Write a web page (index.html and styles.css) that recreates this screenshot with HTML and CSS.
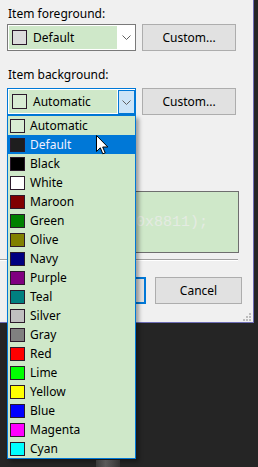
FILE: index.html
```html
<!DOCTYPE html>
<html lang="en">
<head>
    <meta charset="UTF-8">
    <title>Item Colors</title>
    <link rel="stylesheet" href="styles.css">
</head>
<body>
    <!-- Color dialog -->
    <div class="dialog">
        <div class="field-label">Item foreground:</div>
        <div class="field-row">
            <div class="combo">
                <div class="combo-value">
                    <span class="swatch" style="background:#dcdcdc"></span>
                    Default
                </div>
                <div class="combo-arrow">
                    <svg width="9" height="5" viewBox="0 0 9 5"><polyline points="0.5,0.5 4.5,4.5 8.5,0.5" fill="none" stroke="#606060" stroke-width="1"/></svg>
                </div>
            </div>
            <button class="btn">Custom...</button>
        </div>

        <div class="field-label second">Item background:</div>
        <div class="field-row">
            <div class="combo open">
                <div class="combo-value">
                    <span class="swatch" style="background:#d8ecd3"></span>
                    Automatic
                </div>
                <div class="combo-arrow">
                    <svg width="9" height="5" viewBox="0 0 9 5"><polyline points="0.5,0.5 4.5,4.5 8.5,0.5" fill="none" stroke="#606060" stroke-width="1"/></svg>
                </div>
            </div>
            <button class="btn">Custom...</button>
        </div>

        <div class="preview"><code>0x8811);</code></div>
        <div class="separator"></div>

        <div class="actions">
            <button class="btn btn-default">OK</button>
            <button class="btn btn-cancel">Cancel</button>
        </div>

        <svg class="grip" width="9" height="9" viewBox="0 0 9 9">
            <rect x="7" y="1" width="2" height="2"/>
            <rect x="4" y="4" width="2" height="2"/>
            <rect x="7" y="4" width="2" height="2"/>
            <rect x="1" y="7" width="2" height="2"/>
            <rect x="4" y="7" width="2" height="2"/>
            <rect x="7" y="7" width="2" height="2"/>
        </svg>
    </div>

    <!-- Open dropdown list -->
    <ul class="dropdown">
        <li><span class="swatch" style="background:#d8ecd3"></span>Automatic</li>
        <li class="selected"><span class="swatch" style="background:#1e1e1e"></span>Default</li>
        <li><span class="swatch" style="background:#000000"></span>Black</li>
        <li><span class="swatch" style="background:#ffffff"></span>White</li>
        <li><span class="swatch" style="background:#800000"></span>Maroon</li>
        <li><span class="swatch" style="background:#008000"></span>Green</li>
        <li><span class="swatch" style="background:#808000"></span>Olive</li>
        <li><span class="swatch" style="background:#000080"></span>Navy</li>
        <li><span class="swatch" style="background:#800080"></span>Purple</li>
        <li><span class="swatch" style="background:#008080"></span>Teal</li>
        <li><span class="swatch" style="background:#c0c0c0"></span>Silver</li>
        <li><span class="swatch" style="background:#808080"></span>Gray</li>
        <li><span class="swatch" style="background:#ff0000"></span>Red</li>
        <li><span class="swatch" style="background:#00ff00"></span>Lime</li>
        <li><span class="swatch" style="background:#ffff00"></span>Yellow</li>
        <li><span class="swatch" style="background:#0000ff"></span>Blue</li>
        <li><span class="swatch" style="background:#ff00ff"></span>Magenta</li>
        <li><span class="swatch" style="background:#00ffff"></span>Cyan</li>
    </ul>

    <!-- Mouse pointer -->
    <svg class="cursor" width="13" height="21" viewBox="0 0 13 21">
        <path d="M0.5,0.5 L0.5,16.5 L4.3,12.8 L6.8,18.8 L9.2,17.8 L6.7,12 L11.8,12 Z" fill="#fff" stroke="#000" stroke-width="1" stroke-linejoin="miter"/>
    </svg>

    <div class="desktop-smudge"></div>
</body>
</html>
```

FILE: styles.css
```css
* {
    box-sizing: border-box;
}

body {
    margin: 0;
    width: 258px;
    height: 467px;
    overflow: hidden;
    position: relative;
    background: #252525;
    font-family: "Noto Sans", "Liberation Sans", sans-serif;
    font-size: 12px;
    color: #000;
}

.dialog {
    position: relative;
    width: 254px;
    height: 323px;
    background: #f0f0f0;
    border-right: 1px solid #6c6cb4;
    border-bottom: 1px solid #6c6cb4;
    padding-top: 6px;
}

.field-label {
    line-height: 16px;
    height: 16px;
    padding-left: 8px;
}

.field-label.second {
    margin-top: 16px;
}

.field-row {
    display: flex;
    gap: 6px;
    padding-left: 7px;
    margin-top: 2px;
}

.field-label.second + .field-row {
    margin-top: 5px;
}

/* Combo box */
.combo {
    width: 129px;
    height: 27px;
    border: 1px solid #7a7a7a;
    background: #fff;
    padding: 1px;
    display: flex;
    gap: 1px;
}

.combo.open {
    border-color: #0078d7;
}

.combo-value {
    width: 108px;
    background: #cfe8c9;
    display: flex;
    align-items: center;
    gap: 6px;
    padding-left: 3px;
}

.combo-value .swatch {
    width: 15px;
    height: 15px;
}

.combo-arrow {
    flex: 1;
    display: flex;
    align-items: center;
    justify-content: center;
}

.combo-arrow svg {
    display: block;
}

.combo.open .combo-arrow {
    background: #cce4f7;
    border: 1px solid #0078d7;
    margin: 0 -1px -1px 0;
}

.swatch {
    display: inline-block;
    flex: none;
    width: 15px;
    height: 14px;
    border: 1px solid #2b1a2b;
}

/* Buttons */
.btn {
    width: 94px;
    height: 27px;
    margin: 0;
    padding: 0;
    background: #e1e1e1;
    border: 1px solid #adadad;
    font-family: inherit;
    font-size: 12px;
    color: #000;
}

.btn-default {
    width: 86px;
    border: 2px solid #0078d7;
}

.btn-cancel {
    width: 87px;
}

/* Preview */
.preview {
    margin: 76px 0 0 8px;
    width: 231px;
    height: 62px;
    border: 1px solid #6e6e6e;
    background: #cfe8c9;
    display: flex;
    align-items: center;
    padding-left: 127px;
}

.preview code {
    font-family: "Liberation Mono", monospace;
    font-size: 15px;
    color: #e4ebe2;
}

.separator {
    margin-top: 6px;
    width: 238px;
    height: 2px;
    border-top: 1px solid #a0a0a0;
    border-bottom: 1px solid #ffffff;
}

.actions {
    margin-top: 16px;
    display: flex;
    justify-content: flex-end;
    gap: 9px;
    padding-right: 11px;
}

.grip {
    position: absolute;
    right: 2px;
    bottom: 1px;
    fill: #bcbcbc;
}

/* Dropdown list */
.dropdown {
    position: absolute;
    left: 7px;
    top: 115px;
    width: 129px;
    margin: 0;
    padding: 0;
    list-style: none;
    background: #cfe8c9;
    border: 1px solid #0078d7;
    box-shadow: 3px 3px 4px rgba(0, 0, 0, 0.35);
}

.dropdown li {
    height: 19px;
    display: flex;
    align-items: center;
    gap: 5px;
    padding-left: 2px;
    line-height: 19px;
}

.dropdown li.selected {
    background: #0078d7;
    color: #f2f0ff;
}

.cursor {
    position: absolute;
    left: 96px;
    top: 135px;
}

.desktop-smudge {
    position: absolute;
    left: 96px;
    top: 460px;
    width: 24px;
    height: 7px;
    background: linear-gradient(90deg, #3a3a3a, #5a5a5a 40%, #484848 70%, #333);
}
```
